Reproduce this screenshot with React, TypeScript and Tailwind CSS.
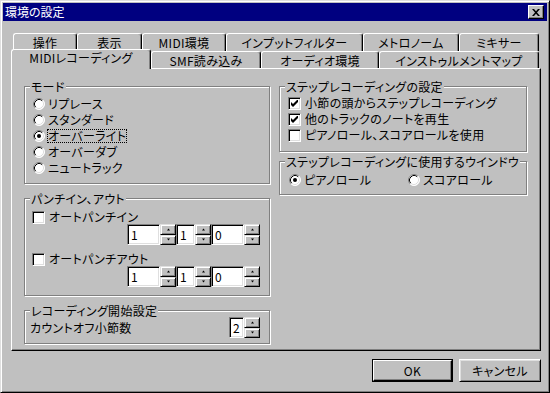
import React from "react";

function Radio({ checked }: { checked?: boolean }) {
  return (
    <svg width="12" height="12" viewBox="0 0 12 12" className="shrink-0">
      <circle cx="6" cy="6" r="5.5" fill="#fff" />
      <path d="M2.11 9.89 A5.5 5.5 0 0 1 9.89 2.11" stroke="#808080" fill="none" />
      <path d="M9.89 2.11 A5.5 5.5 0 0 1 2.11 9.89" stroke="#fff" fill="none" />
      <path d="M2.82 9.18 A4.5 4.5 0 0 1 9.18 2.82" stroke="#000" fill="none" />
      <path d="M9.18 2.82 A4.5 4.5 0 0 1 2.82 9.18" stroke="#dfdfdf" fill="none" />
      {checked && <circle cx="6" cy="6" r="2" fill="#000" />}
    </svg>
  );
}

function Check({ checked }: { checked?: boolean }) {
  return (
    <div className="w-[13px] h-[13px] shrink-0 bg-white border border-t-[#808080] border-l-[#808080] border-r-white border-b-white shadow-[inset_1px_1px_0_#000,inset_-1px_-1px_0_#dfdfdf] flex items-center justify-center">
      {checked && (
        <svg width="7" height="7" viewBox="0 0 7 7">
          <path d="M0 2 L2 4 L7 -1 L7 2 L2 7 L0 5 Z" fill="#000" />
        </svg>
      )}
    </div>
  );
}

function Arrow({ up }: { up?: boolean }) {
  return (
    <svg width="5" height="3" viewBox="0 0 5 3">
      <path d={up ? "M2.5 0.5 L4 2.5 L1 2.5 Z" : "M1 0.5 L4 0.5 L2.5 2.5 Z"} fill="#000" />
    </svg>
  );
}

function SpinBtn({ up }: { up?: boolean }) {
  return (
    <div className="flex-1 bg-[#c0c0c0] border border-t-[#dfdfdf] border-l-[#dfdfdf] border-r-black border-b-black shadow-[inset_1px_1px_0_#fff,inset_-1px_-1px_0_#808080] flex items-center justify-center">
      <Arrow up={up} />
    </div>
  );
}

function SpinEdit({ value, wide }: { value: string; wide: "a" | "b" | "c" }) {
  const w = wide === "a" ? "w-[33px]" : wide === "b" ? "w-[19px]" : "w-[15px]";
  return (
    <div className="flex h-[21px]">
      <div
        className={`${w} h-full bg-white border border-t-[#808080] border-l-[#808080] border-r-white border-b-white shadow-[inset_1px_1px_0_#000,inset_-1px_-1px_0_#dfdfdf] flex items-center pl-[3px]`}
      >
        {value}
      </div>
      <div className="w-[16px] h-full flex flex-col">
        <SpinBtn up />
        <SpinBtn />
      </div>
    </div>
  );
}

function Group({
  label,
  className,
  children,
}: {
  label: string;
  className: string;
  children?: React.ReactNode;
}) {
  return (
    <div
      className={`relative border border-[#808080] shadow-[inset_1px_1px_0_#fff,1px_1px_0_#fff] ${className}`}
    >
      <span className="absolute -top-[6px] left-[5px] px-[1px] bg-[#c0c0c0] leading-[12px] whitespace-nowrap">
        {label}
      </span>
      {children}
    </div>
  );
}

function Tab({ label, w }: { label: string; w: string }) {
  return (
    <div
      className={`${w} h-full shrink-0 bg-[#c0c0c0] border-t border-l border-r border-t-white border-l-white border-r-black rounded-t-[3px] shadow-[inset_-1px_0_0_#808080] flex items-center justify-center whitespace-nowrap`}
    >
      {label}
    </div>
  );
}

function Tab2({ label, w }: { label: string; w: string }) {
  return (
    <div
      className={`${w} h-full shrink-0 bg-[#c0c0c0] border-t border-l border-r border-t-white border-l-white border-r-black rounded-t-[3px] shadow-[inset_-1px_0_0_#808080] flex items-center justify-center pt-[2px] whitespace-nowrap`}
    >
      {label}
    </div>
  );
}

export default function App() {
  return (
    <div className="w-[550px] h-[393px] bg-[#c0c0c0] border border-[#dfdfdf] border-r-black border-b-black shadow-[inset_1px_1px_0_#fff,inset_-1px_-1px_0_#808080] p-[2px] flex flex-col text-[12px] leading-[12px] tracking-[0.3px] text-black font-['Noto_Sans_CJK_JP','Noto_Sans',sans-serif] [font-feature-settings:'palt'] select-none">
      {/* Title bar */}
      <div className="h-[18px] shrink-0 bg-[#000080] flex items-center justify-between pl-[2px] pr-[3px] text-white">
        <span className="whitespace-nowrap tracking-normal">環境の設定</span>
        <div className="w-[16px] h-[14px] bg-[#c0c0c0] border border-t-white border-l-white border-r-black border-b-black shadow-[inset_-1px_-1px_0_#808080] flex items-center justify-center">
          <svg width="8" height="7" viewBox="0 0 8 7">
            <path
              d="M0 0 L2 0 L4 2.3 L6 0 L8 0 L5 3.5 L8 7 L6 7 L4 4.7 L2 7 L0 7 L3 3.5 Z"
              fill="#000"
            />
          </svg>
        </div>
      </div>

      {/* Tabs row 1 */}
      <div className="mt-[12px] ml-[10px] flex h-[18px] shrink-0">
        <Tab label="操作" w="w-[64px]" />
        <Tab label="表示" w="w-[65px]" />
        <Tab label="MIDI環境" w="w-[84px]" />
        <Tab label="インプットフィルター" w="w-[137px]" />
        <Tab label="メトロノーム" w="w-[96px]" />
        <Tab label="ミキサー" w="w-[80px]" />
      </div>
      {/* Tabs row 2 */}
      <div className="ml-[8px] flex h-[17px] shrink-0">
        <div className="relative z-10 self-start -mt-[2px] w-[140px] h-[20px] shrink-0 bg-[#c0c0c0] border-t border-l border-r border-t-white border-l-white border-r-black rounded-t-[3px] shadow-[inset_-1px_0_0_#808080] flex items-center justify-center pb-[3px] whitespace-nowrap">
          MIDIレコーディング
        </div>
        <Tab2 label="SMF読み込み" w="w-[110px]" />
        <Tab2 label="オーディオ環境" w="w-[118px]" />
        <Tab2 label="インストゥルメントマップ" w="w-[160px]" />
      </div>

      {/* Panel */}
      <div className="ml-[8px] w-[530px] h-[283px] shrink-0 border border-white border-r-black border-b-black shadow-[inset_-1px_-1px_0_#808080] flex pl-[12px] pt-[17px]">
        {/* Left column */}
        <div className="w-[246px] flex flex-col">
          <Group label="モード" className="h-[98px] pt-[9px] pl-[8px] flex flex-col">
            {[
              ["リプレース", false],
              ["スタンダード", false],
              ["オーバーライト", true],
              ["オーバーダブ", false],
              ["ニュートラック", false],
            ].map(([t, c]) => (
              <div key={t as string} className="h-[16px] flex items-center">
                <Radio checked={c as boolean} />
                <span
                  className={`ml-[3px] whitespace-nowrap ${
                    c ? "outline-1 outline-dotted outline-black" : ""
                  }`}
                >
                  {t as string}
                </span>
              </div>
            ))}
          </Group>

          <Group label="パンチイン、アウト" className="mt-[14px] h-[98px] pt-[11px] flex flex-col">
            <div className="h-[14px] pl-[7px] flex items-center">
              <Check />
              <span className="ml-[4px] whitespace-nowrap">オートパンチイン</span>
            </div>
            <div className="h-[21px] pr-[9px] flex justify-end">
              <SpinEdit value="1" wide="a" />
              <SpinEdit value="1" wide="b" />
              <SpinEdit value="0" wide="a" />
            </div>
            <div className="mt-[7px] h-[14px] pl-[7px] flex items-center">
              <Check />
              <span className="ml-[4px] whitespace-nowrap">オートパンチアウト</span>
            </div>
            <div className="h-[21px] pr-[9px] flex justify-end">
              <SpinEdit value="1" wide="a" />
              <SpinEdit value="1" wide="b" />
              <SpinEdit value="0" wide="a" />
            </div>
          </Group>

          <Group label="レコーディング開始設定" className="mt-[14px] h-[34px] pt-[6px] pl-[5px] pr-[9px] flex items-start justify-between">
            <span className="h-[21px] flex items-center whitespace-nowrap">カウントオフ小節数</span>
            <SpinEdit value="2" wide="c" />
          </Group>
        </div>

        {/* Right column */}
        <div className="ml-[9px] w-[248px] flex flex-col">
          <Group label="ステップレコーディングの設定" className="h-[66px] pt-[8px] pl-[8px] flex flex-col">
            {[
              ["小節の頭からステップレコーディング", true],
              ["他のトラックのノートを再生", true],
              ["ピアノロール、スコアロールを使用", false],
            ].map(([t, c]) => (
              <div key={t as string} className="h-[16px] flex items-center">
                <Check checked={c as boolean} />
                <span className="ml-[4px] whitespace-nowrap">{t as string}</span>
              </div>
            ))}
          </Group>
          <Group label="ステップレコーディングに使用するウインドウ" className="mt-[9px] h-[34px] pt-[10px] pl-[9px] flex items-start">
            <div className="w-[119px] h-[16px] flex items-center">
              <Radio checked />
              <span className="ml-[3px] whitespace-nowrap">ピアノロール</span>
            </div>
            <div className="h-[16px] flex items-center">
              <Radio />
              <span className="ml-[3px] whitespace-nowrap">スコアロール</span>
            </div>
          </Group>
        </div>
      </div>

      {/* Buttons */}
      <div className="mt-[8px] mr-[6px] flex justify-end gap-[6px]">
        <div className="w-[81px] h-[23px] border border-black">
          <div className="w-full h-full border border-t-white border-l-white border-r-black border-b-black shadow-[inset_-1px_-1px_0_#808080] flex items-center justify-center">
            OK
          </div>
        </div>
        <div className="w-[82px] h-[23px] border border-t-white border-l-white border-r-black border-b-black shadow-[inset_1px_1px_0_#dfdfdf,inset_-1px_-1px_0_#808080] flex items-center justify-center whitespace-nowrap">
          キャンセル
        </div>
      </div>
    </div>
  );
}
